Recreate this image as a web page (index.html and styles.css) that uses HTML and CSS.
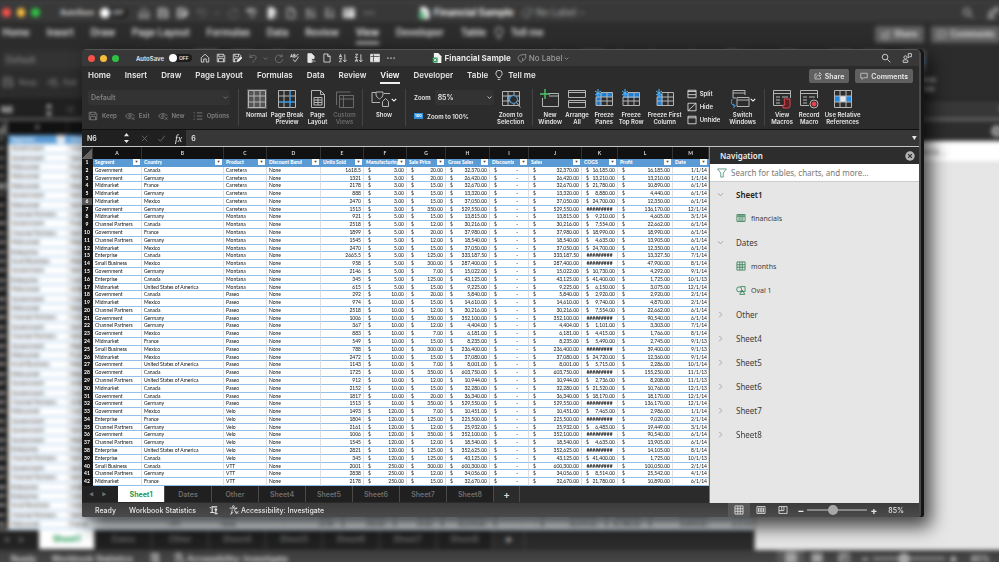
FILE: index.html
```html
<!DOCTYPE html>
<html lang="en">
<head>
    <meta charset="UTF-8">
    <meta name="viewport" content="width=device-width, initial-scale=1.0">
    <title>Financial Sample</title>
    <link rel="stylesheet" href="styles.css">
</head>
<body>

    <!-- Icon sprite -->
    <svg class="sprite" aria-hidden="true">
        <symbol id="i-home" viewBox="0 0 16 16"><path d="M2 7.500 8 2l6 5.500V14.500h-4V9.500H6v5H2z"/></symbol>
        <symbol id="i-save" viewBox="0 0 16 16"><path d="M2 2h10l2 2v10H2zM4.500 2v4h7V2M4 14V9h8v5"/></symbol>
        <symbol id="i-saveas" viewBox="0 0 16 16"><path d="M7 14H2V2h10l2 2v2M4.500 2v4h6V2M4 14V9h5"/><path d="m8 14 1-3 5-5 2 2-5 5z" fill="currentColor"/></symbol>
        <symbol id="i-undo" viewBox="0 0 16 16"><path d="M3 2v5h5M3 7c3-5 11-4 10 1-1 3-4 4-6 7"/></symbol>
        <symbol id="i-redo" viewBox="0 0 16 16"><path d="M13 2v4H9M13 6a6 6 0 1 0 1 4"/></symbol>
        <symbol id="i-spell" viewBox="0 0 16 16"><path d="m5 10 3 4 6-8M1 7l1.500-5L4 7M1.500 5.500h2M6 2v5h1.500c2 0 2-2.500 0-2.500H6 7c2 0 2-2.500 0-2.500zM13.500 2.500c-3-1-3.500 3-2 4"/></symbol>
        <symbol id="i-xls" viewBox="0 0 16 16"><path d="M3 1h6l4 4v4H9v6H3z" fill="currentColor"/><path d="M11 11v4M13 13h2"/></symbol>
        <symbol id="i-doc" viewBox="0 0 16 16"><path d="M3 1.500h6l4 4v9H3zM9 1.500v4h4"/></symbol>
        <symbol id="i-az" viewBox="0 0 16 16"><path d="m2 7 2-5 2 5M3 5.500h2M2 9h4l-4 5h4M11 2v12M8 11l3 3 3-3"/></symbol>
        <symbol id="i-za" viewBox="0 0 16 16"><path d="M2 2h4L2 7h4M2 14l2-5 2 5M3 12.500h2M11 2v12M8 11l3 3 3-3"/></symbol>
        <symbol id="i-pivot" viewBox="0 0 16 16"><path d="M1 2h14v12H1z" fill="currentColor"/><path d="M1 5.500h14M5.500 2v12" stroke="#444"/></symbol>
        <symbol id="i-more" viewBox="0 0 16 16"><path d="M2 8h2M7 8h2M12 8h2" stroke-width="2"/></symbol>
        <symbol id="i-down" viewBox="0 0 8 8"><path d="m1 2.500 3 3 3-3"/></symbol>
        <symbol id="i-right" viewBox="0 0 8 8"><path d="m2.500 1 3 3-3 3"/></symbol>
        <symbol id="i-file" viewBox="0 0 16 16"><path d="M3 0h7l5 5v11H3z" fill="#f2f2f2" stroke="none"/><path d="M1 7h8v8H1z" fill="#2e9e5b" stroke="none"/><path d="m3 9 4 4M7 9l-4 4" stroke="#fff"/></symbol>
        <symbol id="i-label" viewBox="0 0 16 16"><path d="M5 13C-1 10 2 3 8 3l6-1v6l-5 5V8M5 13l3 2"/></symbol>
        <symbol id="i-search" viewBox="0 0 16 16"><circle cx="6.500" cy="6.500" r="4.500"/><path d="m10 10 5 5"/></symbol>
        <symbol id="i-person" viewBox="0 0 16 16"><circle cx="5.500" cy="7" r="2.500"/><path d="M2 15q-2-4 2-4h3q4 0 2 4zM10 1h5v5h-3l-2 2z"/></symbol>
        <symbol id="i-bulb" viewBox="0 0 16 16"><path d="M6 12c0-2-3-3-3-6.500a5 5 0 0 1 10 0C13 9 10 10 10 12zM6 15h4"/></symbol>
        <symbol id="i-share" viewBox="0 0 16 16"><path d="M6 4H2v10h11v-4M5 11c0-4 3-5 6-5V9l4-4-4-4v3"/></symbol>
        <symbol id="i-comment" viewBox="0 0 16 16"><path d="M1.500 2.500h13v9H7l-3 3v-3H1.500z"/></symbol>
        <symbol id="i-eye" viewBox="0 0 16 16"><path d="M1 8c3-5 11-5 14 0M1 8c2 4 5 4 8 4"/><circle cx="8" cy="8" r="2"/><path d="m11 10 4 4M15 10l-4 4"/></symbol>
        <symbol id="i-list" viewBox="0 0 16 16"><path d="M1 3h2M6 3h9M1 8h2M6 8h9M1 13h2M6 13h9"/></symbol>
        <symbol id="i-normal" viewBox="0 0 20 20"><path d="M1.500 1.500h17v17h-17zM1.500 7h17M1.500 13h17M7 1.500v17M13 1.500v17"/></symbol>
        <symbol id="i-break" viewBox="0 0 20 20"><path d="M1.500 1.500h17v17h-17zM1.500 7h17M7 1.500v17"/><path d="M13 2v16M2 13h16" stroke="#3f9ae0" stroke-width="1.500"/></symbol>
        <symbol id="i-page" viewBox="0 0 20 20"><path d="M3.500 1.500h9l4 4v13h-13zM12.500 1.500v4h4M6 8.500h8v7.500H6zM6 11h8M6 13.500h8M10 8.500V16"/></symbol>
        <symbol id="i-custom" viewBox="0 0 20 20"><path d="M1.500 16V3h14M4.500 18.500v-12h14v12zM4.500 10h14M8.500 6.500v12"/></symbol>
        <symbol id="i-show" viewBox="0 0 20 20"><path d="M5 3.500H1v10h8M13 4.500h6M5 3h7v2c0 3-2 4-3.500 5C7 9 5 8 5 5zM11.500 17.500v-5l3-3 3 3v5z"/></symbol>
        <symbol id="i-zoomsel" viewBox="0 0 20 20"><path d="M1.500 2.500h17v14h-17zM1.500 7h17M1.500 12h17M7 2.500v14M13 2.500v14"/><path d="M7 7h6v5H7z" fill="#1f7fd4"/><circle cx="12.500" cy="10.500" r="4" fill="#2c2c2c" stroke="#58a9ea"/><path d="m15.500 13.500 4 5"/></symbol>
        <symbol id="i-newwin" viewBox="0 0 20 20"><path d="M8 4.500h10.500v13h-16V9M9 7h9.500"/><path d="M5 0v10M0 5h10" stroke="#4fc36b" stroke-width="1.400"/></symbol>
        <symbol id="i-arrange" viewBox="0 0 20 20"><path d="M1.500 1.500h17v7h-17zM1.500 3.500h17M1.500 11.500h17v7h-17zM1.500 13.500h17"/></symbol>
        <symbol id="i-fpanes" viewBox="0 0 20 20"><path d="M2 4h17v4H2zM2 4h5v13H2z" fill="#1f7fd4" stroke="none"/><path d="M7 3.500h11.500v13H2V8h16.500M7 3.500v13M13 3.500v13M2 12h16.500"/><path d="M4 0v7M1 2l6 4M7 2 1 6" stroke="#56b4f5"/></symbol>
        <symbol id="i-frow" viewBox="0 0 20 20"><path d="M2 4h17v5H2z" fill="#1f7fd4" stroke="none"/><path d="M7 3.500h11.500v13H2V8h16.500M7 3.500v13M13 3.500v13M2 12h16.500"/><path d="M4 0v7M1 2l6 4M7 2 1 6" stroke="#56b4f5"/></symbol>
        <symbol id="i-fcol" viewBox="0 0 20 20"><path d="M2 5h5.500v12H2z" fill="#1f7fd4" stroke="none"/><path d="M7 3.500h11.500v13H2V8h16.500M7 3.500v13M13 3.500v13M2 12h16.500"/><path d="M4 0v7M1 2l6 4M7 2 1 6" stroke="#56b4f5"/></symbol>
        <symbol id="i-split" viewBox="0 0 16 14"><path d="M1.500 1h13v12h-13zM1.500 3h13M1.500 8h13"/></symbol>
        <symbol id="i-hide" viewBox="0 0 16 14"><path d="M1.500 1h13v12h-13zM1.500 13l13-12"/></symbol>
        <symbol id="i-unhide" viewBox="0 0 16 14"><path d="M1.500 1h13v12h-13zM1.500 3.500h13"/></symbol>
        <symbol id="i-switch" viewBox="0 0 20 20"><path d="M6 9H3V1.500h12V6M3 4h12M7 8.500h12v9H7zM7 11h12"/><path d="M2 10q-2 6 3 7M3 15l2.500 2L3 19" stroke="#3f9ae0"/></symbol>
        <symbol id="i-vmacro" viewBox="0 0 20 20"><path d="M11 16.500H1.500v-15h17V9M1.500 4.500h17M4 8h4M10 8h6M4 11h4M4 14h4"/><path d="M12 10h6v7q0 2-2 2h-5v-3h2z" fill="#5a2226" stroke="#e0444c"/></symbol>
        <symbol id="i-rmacro" viewBox="0 0 20 20"><path d="M10 16.500H1.500v-15h17V9M1.500 4.500h17M4 8h4M10 8h6M4 11h4M4 14h4"/><circle cx="15" cy="15" r="4" fill="#2c2c2c"/><circle cx="15" cy="15" r="2" fill="#ee4450" stroke="#ee4450"/></symbol>
        <symbol id="i-relref" viewBox="0 0 20 20"><path d="M1 7h18v6H1z" fill="#1f8be8" stroke="none"/><path d="M7 7h6v6H7z" fill="#e8e8e8" stroke="none"/><path d="M1.500 1.500h17v17h-17zM1.500 7h17M1.500 13h17M7 1.500v17M13 1.500v17"/></symbol>
        <symbol id="i-x" viewBox="0 0 16 16"><path d="m3 3 10 10M13 3 3 13"/></symbol>
        <symbol id="i-check" viewBox="0 0 16 16"><path d="m2 9 4 4 8-10"/></symbol>
        <symbol id="i-step" viewBox="0 0 8 16"><path d="m4 0 4 5H0zM4 16l4-5H0z" fill="currentColor" stroke="none"/></symbol>
        <symbol id="i-close" viewBox="0 0 16 16"><circle cx="8" cy="8" r="7.500" fill="#b5b5b5" stroke="none"/><path d="m5 5 6 6M11 5l-6 6" stroke="#333" stroke-width="2"/></symbol>
        <symbol id="i-funnel" viewBox="0 0 16 16"><path d="M1 1.500h14L10 8v6.500H6V8z"/></symbol>
        <symbol id="i-cols" viewBox="0 0 16 16"><path d="M1.500 2.500h13v11h-13zM1.500 5h13M5 2.500v11M8 2.500v11M11 2.500v11"/></symbol>
        <symbol id="i-grid" viewBox="0 0 16 16"><path d="M1.500 1.500h13v13h-13zM1.500 6h13M1.500 10h13M6 1.500v13M10 1.500v13"/></symbol>
        <symbol id="i-shape" viewBox="0 0 16 16"><circle cx="5" cy="7" r="4"/><path d="M7 2.500h7.500v8H8M6 15l4-7 4 7z"/></symbol>
        <symbol id="i-record" viewBox="0 0 16 16"><path d="M4 3h9M5 3v9M2 12h7M2 3v2M11 14V6M9 8l2-2 2 2M9 14h5" stroke-width="1.800"/></symbol>
        <symbol id="i-access" viewBox="0 0 16 16"><circle cx="7" cy="2.500" r="1.500"/><path d="M1 5h12l-4 2v2l3 5M5 7v2l-2 6 4-4M11 10l4 4M15 10l-4 4"/></symbol>
        <symbol id="i-pview" viewBox="0 0 16 16"><path d="M1.500 2.500h13v11h-13zM4 5h8M4 8h8M4 11h8M4 5v6M8 5v6M12 5v6"/></symbol>
        <symbol id="i-bview" viewBox="0 0 16 16"><path d="M1.500 2.500h13v11h-13zM1.500 9h8V2.500M6 2.500V9"/></symbol>
    </svg>

    <div class="backdrop" id="backdrop"></div>

    <div class="window" id="window">
        <header class="titlebar">
            <div class="quick">
                <div class="lights"><i class="red"></i><i class="yellow"></i><i class="green"></i></div>
                <label class="autosave">AutoSave <input type="checkbox" class="toggle-input"><span class="toggle">OFF</span></label>
                <div class="quick-icons">
                    <button aria-label="Home"><svg><use href="#i-home"/></svg></button>
                    <button aria-label="Save"><svg><use href="#i-save"/></svg></button>
                    <button aria-label="Save as"><svg><use href="#i-saveas"/></svg></button>
                    <button class="undo dim" aria-label="Undo"><svg><use href="#i-undo"/></svg><svg class="chev"><use href="#i-down"/></svg></button>
                    <button class="dim" aria-label="Redo"><svg><use href="#i-redo"/></svg></button>
                    <button aria-label="Spelling"><svg><use href="#i-spell"/></svg></button>
                    <button aria-label="Export"><svg><use href="#i-xls"/></svg></button>
                    <button aria-label="New file"><svg><use href="#i-doc"/></svg></button>
                    <button aria-label="Sort ascending"><svg><use href="#i-az"/></svg></button>
                    <button aria-label="Sort descending"><svg><use href="#i-za"/></svg></button>
                    <button aria-label="Pivot table"><svg><use href="#i-pivot"/></svg></button>
                    <button aria-label="More"><svg><use href="#i-more"/></svg></button>
                </div>
            </div>
            <div class="doc-title">
                <svg><use href="#i-file"/></svg>
                <strong>Financial Sample</strong>
                <button class="no-label"><svg><use href="#i-label"/></svg>No Label<svg class="chev"><use href="#i-down"/></svg></button>
            </div>
            <div class="title-right">
                <button aria-label="Search"><svg><use href="#i-search"/></svg></button>
                <button aria-label="Account"><svg><use href="#i-person"/></svg></button>
            </div>
        </header>

        <nav class="menu">
            <button>Home</button>
            <button>Insert</button>
            <button>Draw</button>
            <button>Page Layout</button>
            <button>Formulas</button>
            <button>Data</button>
            <button>Review</button>
            <button class="active">View</button>
            <button>Developer</button>
            <button>Table</button>
            <button class="tell"><svg><use href="#i-bulb"/></svg>Tell me</button>
            <div class="menu-right">
                <button class="pill"><svg><use href="#i-share"/></svg>Share</button>
                <button class="pill"><svg><use href="#i-comment"/></svg>Comments</button>
            </div>
        </nav>

        <div class="ribbon">
            <div class="group views">
                <div class="select-wrap">
                    <select aria-label="Sheet view"><option>Default</option></select>
                    <svg class="chev"><use href="#i-down"/></svg>
                </div>
                <div class="view-actions">
                    <button><svg><use href="#i-save"/></svg>Keep</button>
                    <button><svg><use href="#i-eye"/></svg>Exit</button>
                    <button><svg><use href="#i-eye"/></svg>New</button>
                    <button><svg><use href="#i-list"/></svg>Options</button>
                </div>
            </div>
            <div class="group">
                <button class="big selected"><svg><use href="#i-normal"/></svg>Normal</button>
                <button class="big wide"><svg><use href="#i-break"/></svg>Page Break<br>Preview</button>
                <button class="big"><svg><use href="#i-page"/></svg>Page<br>Layout</button>
                <button class="big off"><svg><use href="#i-custom"/></svg>Custom<br>Views</button>
            </div>
            <div class="group">
                <button class="big wide"><span class="with-chev"><svg><use href="#i-show"/></svg><svg class="chev"><use href="#i-down"/></svg></span>Show</button>
            </div>
            <div class="group">
                <div class="zoom-left">
                    <label class="zoom-label">Zoom
                        <span class="select-wrap">
                            <select><option>85%</option></select>
                            <svg class="chev"><use href="#i-down"/></svg>
                        </span>
                    </label>
                    <button class="zoom-full"><span class="badge">100</span>Zoom to 100%</button>
                </div>
                <button class="big wide"><svg><use href="#i-zoomsel"/></svg>Zoom to<br>Selection</button>
            </div>
            <div class="group">
                <button class="big"><svg><use href="#i-newwin"/></svg>New<br>Window</button>
                <button class="big"><svg><use href="#i-arrange"/></svg>Arrange<br>All</button>
                <button class="big"><svg><use href="#i-fpanes"/></svg>Freeze<br>Panes</button>
                <button class="big"><svg><use href="#i-frow"/></svg>Freeze<br>Top Row</button>
                <button class="big wider"><svg><use href="#i-fcol"/></svg>Freeze First<br>Column</button>
                <div class="stack">
                    <button><svg><use href="#i-split"/></svg>Split</button>
                    <button><svg><use href="#i-hide"/></svg>Hide</button>
                    <button><svg><use href="#i-unhide"/></svg>Unhide</button>
                </div>
                <button class="big wide"><span class="with-chev"><svg><use href="#i-switch"/></svg><svg class="chev"><use href="#i-down"/></svg></span>Switch<br>Windows</button>
            </div>
            <div class="group">
                <button class="big"><svg><use href="#i-vmacro"/></svg>View<br>Macros</button>
                <button class="big"><svg><use href="#i-rmacro"/></svg>Record<br>Macro</button>
                <button class="big wider"><svg><use href="#i-relref"/></svg>Use Relative<br>References</button>
            </div>
        </div>

        <div class="formula-bar">
            <input class="name-box" aria-label="Name box" value="N6">
            <svg class="step"><use href="#i-step"/></svg>
            <button class="dim" aria-label="Cancel"><svg><use href="#i-x"/></svg></button>
            <button class="dim" aria-label="Enter"><svg><use href="#i-check"/></svg></button>
            <span class="fx">fx</span>
            <input class="formula" aria-label="Formula" value="6">
            <button class="expand" aria-label="Expand formula bar">▼</button>
        </div>

        <main class="main">
            <section class="book">
                <table class="sheet">
                    <thead><tr class="letters" id="letters"></tr></thead>
                    <tbody id="rows"></tbody>
                </table>
                <div class="sheet-tabs">
                    <span class="arrows"><button aria-label="Previous sheet">◀</button><button aria-label="Next sheet">▶</button></span>
                    <button class="tab current">Sheet1</button>
                    <button class="tab">Dates</button>
                    <button class="tab">Other</button>
                    <button class="tab">Sheet4</button>
                    <button class="tab">Sheet5</button>
                    <button class="tab">Sheet6</button>
                    <button class="tab">Sheet7</button>
                    <button class="tab">Sheet8</button>
                    <button class="add" aria-label="Add sheet">+</button>
                </div>
            </section>

            <aside class="nav">
                <div class="nav-head"><h2>Navigation</h2><button aria-label="Close"><svg><use href="#i-close"/></svg></button></div>
                <label class="nav-search">
                    <svg><use href="#i-funnel"/></svg>
                    <input type="search" aria-label="Search" placeholder="Search for tables, charts, and more...">
                </label>
                <div class="tree">
                    <button class="node bold"><svg><use href="#i-down"/></svg>Sheet1</button>
                    <button class="leaf"><svg><use href="#i-cols"/></svg>financials</button>
                    <button class="node"><svg><use href="#i-down"/></svg>Dates</button>
                    <button class="leaf"><svg><use href="#i-grid"/></svg>months</button>
                    <button class="leaf"><svg><use href="#i-shape"/></svg>Oval 1</button>
                    <button class="node"><svg><use href="#i-right"/></svg>Other</button>
                    <button class="node"><svg><use href="#i-right"/></svg>Sheet4</button>
                    <button class="node"><svg><use href="#i-right"/></svg>Sheet5</button>
                    <button class="node"><svg><use href="#i-right"/></svg>Sheet6</button>
                    <button class="node"><svg><use href="#i-right"/></svg>Sheet7</button>
                    <button class="node"><svg><use href="#i-right"/></svg>Sheet8</button>
                </div>
            </aside>
        </main>

        <footer class="status">
            <span>Ready</span>
            <button>Workbook Statistics</button>
            <button aria-label="Record macro"><svg><use href="#i-record"/></svg></button>
            <button class="access"><svg><use href="#i-access"/></svg>Accessibility: Investigate</button>
            <div class="status-right">
                <button class="view on" aria-label="Normal view"><svg><use href="#i-grid"/></svg></button>
                <button class="view" aria-label="Page layout view"><svg><use href="#i-pview"/></svg></button>
                <button class="view" aria-label="Page break view"><svg><use href="#i-bview"/></svg></button>
                <button class="sign" aria-label="Zoom out">−</button>
                <input type="range" class="slider" aria-label="Zoom" min="0" max="100" value="42">
                <button class="sign" aria-label="Zoom in">+</button>
                <span class="percent">85%</span>
            </div>
        </footer>
    </div>

    <script src="script.js"></script>
</body>
</html>
```

FILE: script.js
```js
const headings = ['Segment', 'Country', 'Product', 'Discount Band', 'Units Sold', 'Manufacturing', 'Sale Price',
    'Gross Sales', 'Discounts', 'Sales', 'COGS', 'Profit', 'Date'];

// product, manufacturing price, rows: segment|country|units|sale price|profit|date
const products = [
    ['Carretera', 3, `Government|Canada|1618.5|20|16185|1/1/14
Government|Germany|1321|20|13210|1/1/14
Midmarket|France|2178|15|10890|6/1/14
Midmarket|Germany|888|15|4440|6/1/14
Midmarket|Mexico|2470|15|12350|6/1/14
Government|Germany|1513|350|136170|12/1/14`],
    ['Montana', 5, `Midmarket|Germany|921|15|4605|3/1/14
Channel Partners|Canada|2518|12|22662|6/1/14
Government|France|1899|20|18990|6/1/14
Channel Partners|Germany|1545|12|13905|6/1/14
Midmarket|Mexico|2470|15|12350|6/1/14
Enterprise|Canada|2665.5|125|13327.5|7/1/14
Small Business|Mexico|958|300|47900|8/1/14
Government|Germany|2146|7|4292|9/1/14
Enterprise|Canada|345|125|1725|10/1/13
Midmarket|United States of America|615|15|3075|12/1/14`],
    ['Paseo', 10, `Government|Canada|292|20|2920|2/1/14
Midmarket|Mexico|974|15|4870|2/1/14
Channel Partners|Canada|2518|12|22662|6/1/14
Government|Germany|1006|350|90540|6/1/14
Channel Partners|Germany|367|12|3303|7/1/14
Government|Mexico|883|7|1766|8/1/14
Midmarket|France|549|15|2745|9/1/13
Small Business|Mexico|788|300|39400|9/1/13
Midmarket|Mexico|2472|15|12360|9/1/14
Government|United States of America|1143|7|2286|10/1/14
Government|Canada|1725|350|155250|11/1/13
Channel Partners|United States of America|912|12|8208|11/1/13
Midmarket|Canada|2152|15|10760|12/1/13
Government|Canada|1817|20|18170|12/1/14
Government|Germany|1513|350|136170|12/1/14`],
    ['Velo', 120, `Government|Mexico|1493|7|2986|1/1/14
Enterprise|France|1804|125|9020|2/1/14
Channel Partners|Germany|2161|12|19449|3/1/14
Government|Germany|1006|350|90540|6/1/14
Channel Partners|Germany|1545|12|13905|6/1/14
Enterprise|United States of America|2821|125|14105|8/1/14
Enterprise|Canada|345|125|1725|10/1/13`],
    ['VTT', 250, `Small Business|Canada|2001|300|100050|2/1/14
Channel Partners|Germany|2838|12|25542|4/1/14
Midmarket|France|2178|15|10890|6/1/14`]
];

function money(value) {
    const text = value.toLocaleString('en-US', { minimumFractionDigits: 2, maximumFractionDigits: 2 });
    return `<td class="money"><span>$</span><span>${text}</span></td>`;
}

// Column letters
document.getElementById('letters').innerHTML = '<th class="corner"></th>' +
    [...'ABCDEFGHIJKLM'].map(letter => `<th>${letter}</th>`).join('');

let html = '<tr class="head"><th class="num">1</th>' +
    headings.map(h => `<th><span>${h}</span><button aria-label="Filter ${h}">▼</button></th>`).join('') + '</tr>';

let line = 2;
products.forEach(([product, cost, text]) => {
    text.split('\n').forEach(row => {
        const [segment, country, units, price, profit, date] = row.split('|');
        const gross = units * price;
        const cogs = gross - profit;
        html += `<tr><th class="num${line === 6 ? ' picked' : ''}">${line}</th>` +
            `<td>${segment}</td><td>${country}</td><td>${product}</td><td>None</td><td class="right">${units}</td>` +
            money(cost) + money(+price) + money(gross) +
            '<td class="money none"><span>$</span><span>-</span></td>' + money(gross) +
            // too wide for the column
            (cogs > 99999 ? '<td class="hash">#########</td>' : money(cogs)) +
            money(+profit) + `<td class="date">${date}</td></tr>`;
        line++;
    });
});
document.getElementById('rows').innerHTML = html;

// Blurred copy of the window behind it
const copy = document.getElementById('window').cloneNode(true);
copy.querySelectorAll('[id]').forEach(el => el.removeAttribute('id'));
copy.removeAttribute('id');
const backdrop = document.getElementById('backdrop');
backdrop.setAttribute('aria-hidden', 'true');
backdrop.inert = true;
backdrop.appendChild(copy);
```

FILE: styles.css
```css
* {
    box-sizing: border-box;
}

body {
    margin: 0;
    height: 100vh;
    padding: 49px 78px 45px 82px;
    background: #333;
    font-family: Inter, "Liberation Sans", sans-serif;
    font-size: 8px;
    color: #e6e6e6;
    overflow: hidden;
    position: relative;
}

button, input, select {
    font: inherit;
    color: inherit;
    background: none;
    border: 0;
    padding: 0;
    margin: 0;
    min-width: 0;
}

button {
    display: flex;
    align-items: center;
    white-space: nowrap;
}

svg {
    width: 10px;
    height: 10px;
    flex: none;
    fill: none;
    stroke: currentColor;
    stroke-width: 1.3;
}

.sprite {
    position: absolute;
    width: 0;
    height: 0;
}

.chev {
    width: 5px;
    height: 5px;
}

.dim {
    color: #777;
}

/* Blurred copy */
.backdrop {
    position: absolute;
    top: 2px;
    right: -11px;
    bottom: -5px;
    left: -5px;
    filter: blur(2px);
}

.backdrop .window {
    zoom: 1.21;
    box-shadow: none;
}

.window {
    position: relative;
    height: 100%;
    display: flex;
    flex-direction: column;
    background: #2c2c2c;
    border-top: 1px solid #555;
    border-right: 2px solid #4a4a4a;
    border-radius: 5px 5px 2px 2px;
    box-shadow: 3px 0 0 #161616, 8px 8px 18px 2px rgba(0, 0, 0, 0.7);
    overflow: hidden;
}

/* Title bar */
.titlebar {
    display: grid;
    grid-template-columns: 1fr auto 1fr;
    align-items: center;
    height: 16px;
    background: #383838;
}

.quick, .lights, .quick-icons, .doc-title, .title-right, .autosave {
    display: flex;
    align-items: center;
}

.lights {
    gap: 5px;
    margin: 0 17px 0 6px;
}

.lights i {
    width: 7px;
    height: 7px;
    border-radius: 50%;
}

.red { background: #f6514b; }
.yellow { background: #f6bd3b; }
.green { background: #2fc143; }

.autosave {
    gap: 5px;
    font-size: 6px;
    font-weight: 600;
    margin-right: 8px;
}

.toggle-input {
    position: absolute;
    opacity: 0;
}

.toggle {
    display: flex;
    align-items: center;
    width: 23px;
    height: 8px;
    border-radius: 4px;
    background: #1c1c1c;
    font-size: 5px;
    gap: 2px;
}

.toggle::before {
    content: "";
    width: 8px;
    height: 8px;
    border-radius: 50%;
    background: #fff;
}

.quick-icons {
    gap: 6px;
}

.undo {
    gap: 5px;
}

.doc-title {
    gap: 3px;
}

.no-label {
    gap: 2px;
    margin-left: 3px;
    color: #9a9a9a;
    font-weight: 500;
}

.title-right {
    justify-content: flex-end;
    gap: 11px;
    padding-right: 7px;
}

/* Menu */
.menu {
    display: flex;
    align-items: center;
    gap: 14px;
    height: 19px;
    padding: 0 6px;
    font-weight: 600;
}

.menu > button {
    height: 16px;
    border-bottom: 2px solid transparent;
}

.menu > .active {
    border-color: #f0f0f0;
    color: #fff;
}

.menu .tell {
    gap: 4px;
    margin-left: -8px;
}

.menu-right {
    display: flex;
    gap: 6px;
    margin-left: auto;
}

.pill {
    gap: 3px;
    height: 14px;
    padding: 0 5px;
    border-radius: 2px;
    background: #606060;
    font-size: 7px;
}

.menu-right .pill {
    margin-top: 1px;
}

.pill svg {
    width: 8px;
    height: 8px;
}

/* Ribbon */
.ribbon {
    display: flex;
    align-items: center;
    height: 45px;
    border-bottom: 1px solid #111;
    font-size: 6px;
    font-weight: 600;
}

.group {
    display: flex;
    align-items: flex-start;
    height: 37px;
    padding: 0 4px;
    border-right: 1px solid #444;
}

.group:last-child {
    border-right: 0;
}

.views {
    flex-direction: column;
    width: 157px;
    gap: 6px;
    padding: 1px 6px;
    color: #808080;
}

.select-wrap {
    display: grid;
    align-items: center;
    justify-items: end;
    background: #333;
    border-radius: 2px;
}

.select-wrap > * {
    grid-area: 1 / 1;
}

.select-wrap select {
    appearance: none;
    width: 100%;
    height: 15px;
    padding: 0 3px;
    font-size: 7px;
}

.select-wrap .chev {
    margin-right: 2px;
}

.views .select-wrap {
    width: 142px;
}

.view-actions {
    display: flex;
    gap: 8px;
}

.view-actions button {
    gap: 4px;
}

.big {
    flex-direction: column;
    width: 27px;
    line-height: 7px;
    text-align: center;
}

.big svg {
    width: 20px;
    height: 20px;
    margin-bottom: 2px;
    stroke-width: 1;
    color: #b5b5b5;
}

.big .chev {
    width: 6px;
    height: 6px;
    color: #fff;
    stroke-width: 1.4;
    margin: 0;
}

.wide {
    width: 34px;
}

.wider {
    width: 40px;
}

.selected svg {
    background: #555;
}

.off, .off svg {
    color: #6a6a6a;
}

.with-chev {
    display: flex;
    align-items: center;
}

.zoom-left {
    display: flex;
    flex-direction: column;
    gap: 8px;
    padding: 1px 0 0 4px;
}

.zoom-label {
    display: flex;
    align-items: center;
    gap: 4px;
}

.zoom-label .select-wrap {
    width: 59px;
}

.zoom-full {
    gap: 4px;
}

.badge {
    padding: 0 1px;
    background: #2f8fdc;
    color: #fff;
    font-size: 4px;
    line-height: 6px;
}

.stack {
    display: flex;
    flex-direction: column;
    gap: 3px;
    width: 41px;
    padding: 0 2px;
}

.stack button {
    gap: 3px;
    height: 10px;
}

/* Formula bar */
.formula-bar {
    display: flex;
    align-items: center;
    height: 17px;
    background: #202020;
    border-bottom: 1px solid #c4c4c4;
    font-size: 7px;
    font-weight: 600;
}

.name-box {
    width: 37px;
    padding-left: 5px;
}

.step {
    width: 5px;
    margin: 0 11px 0 5px;
}

.formula-bar button.dim {
    margin-right: 8px;
}

.formula-bar .dim svg {
    width: 9px;
    height: 9px;
}

.fx {
    padding: 0 4px 0 1px;
    font: italic 10px "Liberation Serif", serif;
}

.formula {
    flex: 1;
    height: 16px;
    padding-left: 5px;
    background: #373737;
}

.expand {
    height: 16px;
    padding-right: 2px;
    background: #373737;
    font-size: 5px;
}

/* Sheet */
.main {
    flex: 1;
    min-height: 0;
    display: flex;
}

.book {
    flex: 1;
    min-width: 0;
    display: flex;
    flex-direction: column;
}

.sheet {
    flex: 1;
    min-height: 0;
    display: grid;
    grid-template-rows: 12px repeat(42, minmax(0, 1fr));
    background: #fff;
    color: #111;
    font-family: Lato, "Liberation Sans", sans-serif;
    font-size: 5px;
    line-height: 7px;
}

.sheet thead, .sheet tbody {
    display: contents;
}

.sheet tr {
    display: grid;
    grid-template-columns: 11px 49px 82px 43px 54px 43px 43px 39px 44px 39px 53px 36px 55px minmax(36px, 1fr);
    min-height: 0;
}

.sheet th, .sheet td {
    padding: 0 2px;
    border-right: 1px solid #dedede;
    border-bottom: 1px solid #93bfe8;
    white-space: nowrap;
    overflow: hidden;
    text-align: left;
}

.sheet .letters th {
    border: 0;
    border-right: 1px solid #333;
    background: #111;
    color: #ddd;
    text-align: center;
    line-height: 12px;
}

.sheet .letters .corner {
    background: linear-gradient(135deg, #222 50%, #666 50%);
}

.sheet .num {
    padding: 0;
    background: #151515;
    border-color: #151515;
    color: #fff;
    text-align: center;
}

.sheet .picked {
    background: #555;
}

.head th:not(.num) {
    display: flex;
    justify-content: space-between;
    align-items: center;
    padding-right: 1px;
    background: #5b9bd5;
    border-color: #5b9bd5;
    color: #fff;
    font-weight: 900;
}

.head span {
    overflow: hidden;
}

.head button {
    flex: none;
    justify-content: center;
    width: 7px;
    height: 6px;
    background: #fff;
    color: #444;
    font-size: 4px;
    line-height: 6px;
}

.sheet .right, .sheet .date {
    text-align: right;
}

.sheet .date {
    padding-right: 1px;
}

.sheet .money {
    display: flex;
    justify-content: space-between;
    padding-left: 4px;
}

.sheet .none {
    padding-right: 10px;
}

.sheet .hash {
    text-align: center;
    font-weight: 700;
}

/* Sheet tabs */
.sheet-tabs {
    display: flex;
    height: 17px;
    padding-bottom: 1px;
    background: #2b2b2b;
    font-size: 7px;
    font-weight: 600;
    color: #6e6e6e;
}

.arrows {
    display: flex;
    gap: 8px;
    width: 36px;
    padding-left: 7px;
    background: #222;
    font-size: 5px;
}

.tab {
    justify-content: center;
    width: 47px;
    border-right: 1px solid #4a4a4a;
    background: #202020;
}

.current {
    background: #fff;
    color: #249a5b;
    font-weight: 700;
}

.add {
    justify-content: center;
    width: 26px;
    border-right: 1px solid #4a4a4a;
    font-size: 10px;
    line-height: 10px;
    color: #ddd;
}

/* Navigation pane */
.nav {
    width: 210px;
    background: #e6e6e6;
    border-left: 1px solid #777;
    font-family: "Noto Sans", sans-serif;
    color: #3c3c3c;
}

.nav-head {
    display: flex;
    align-items: center;
    justify-content: space-between;
    height: 17px;
    padding: 0 4px 0 10px;
    background: #2d2d2d;
    color: #eee;
}

.nav-head h2 {
    margin: 0;
    font-size: 8px;
    font-weight: 600;
}

.nav-search {
    display: flex;
    align-items: center;
    gap: 4px;
    height: 18px;
    padding: 0 7px;
    background: #fff;
    border-bottom: 1px solid #ccc;
}

.nav-search svg {
    color: #4a8a78;
}

.nav-search input {
    flex: 1;
}

.nav-search input::placeholder {
    color: #777;
}

.tree button {
    width: 100%;
    height: 24px;
}

.node {
    gap: 12px;
    padding-left: 7px;
}

.node svg {
    width: 7px;
    height: 7px;
    stroke-width: 1;
    color: #999;
}

.bold {
    font-weight: 600;
    color: #222;
}

.leaf {
    gap: 5px;
    padding-left: 26px;
    font-size: 7px;
}

.leaf svg {
    color: #2c7d4f;
}

/* Status bar */
.status {
    display: flex;
    align-items: center;
    gap: 13px;
    height: 14px;
    padding: 0 15px 0 13px;
    background: linear-gradient(#3c3c3c, #4a4a4a);
    font-size: 7px;
    font-weight: 500;
}

.access {
    gap: 2px;
    margin-left: -3px;
}

.status-right {
    display: flex;
    align-items: center;
    margin-left: auto;
}

.view {
    justify-content: center;
    width: 22px;
    height: 14px;
}

.on {
    background: #585858;
}

.sign {
    justify-content: center;
    width: 13px;
    font-size: 10px;
    font-weight: 700;
}

.slider {
    appearance: none;
    width: 60px;
    height: 10px;
}

.slider::-webkit-slider-runnable-track {
    height: 2px;
    background: #858585;
}

.slider::-webkit-slider-thumb {
    appearance: none;
    width: 10px;
    height: 10px;
    margin-top: -4px;
    border-radius: 50%;
    background: #a8a8a8;
}

.percent {
    margin-left: 8px;
}
```
